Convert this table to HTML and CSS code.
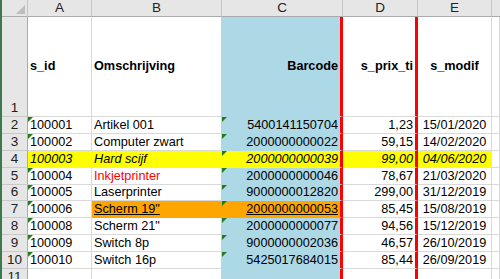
FILE: index.html
```html
<!DOCTYPE html>
<html lang="nl">
  <head>
    <meta charset="UTF-8" />
    <title>Artikelen</title>
    <link rel="stylesheet" href="styles.css">
  </head>
  <body>
    <div class="sheet">
      <!-- kolomkoppen -->
      <div class="row">
        <div class="cell head corner"></div>
        <div class="cell head">A</div>
        <div class="cell head">B</div>
        <div class="cell head">C</div>
        <div class="cell head">D</div>
        <div class="cell head">E</div>
        <div class="cell head last"></div>
      </div>

      <!-- veldnamen -->
      <div class="row title">
        <div class="cell num">1</div>
        <div class="cell a">s_id</div>
        <div class="cell b">Omschrijving</div>
        <div class="cell c right">Barcode</div>
        <div class="cell d right">s_prix_ti</div>
        <div class="cell e center">s_modif</div>
        <div class="cell f"></div>
      </div>

      <div class="row">
        <div class="cell num">2</div>
        <div class="cell a flag">100001</div>
        <div class="cell b">Artikel 001</div>
        <div class="cell c flag right">5400141150704</div>
        <div class="cell d right">1,23</div>
        <div class="cell e center">15/01/2020</div>
        <div class="cell f"></div>
      </div>
      <div class="row">
        <div class="cell num">3</div>
        <div class="cell a flag">100002</div>
        <div class="cell b">Computer zwart</div>
        <div class="cell c flag right">2000000000022</div>
        <div class="cell d right">59,15</div>
        <div class="cell e center">14/02/2020</div>
        <div class="cell f"></div>
      </div>
      <div class="row yellow">
        <div class="cell num">4</div>
        <div class="cell a">100003</div>
        <div class="cell b">Hard scijf</div>
        <div class="cell c flag right">2000000000039</div>
        <div class="cell d right">99,00</div>
        <div class="cell e center">04/06/2020</div>
        <div class="cell f"></div>
      </div>
      <div class="row">
        <div class="cell num">5</div>
        <div class="cell a flag">100004</div>
        <div class="cell b red">Inkjetprinter</div>
        <div class="cell c flag right">2000000000046</div>
        <div class="cell d right">78,67</div>
        <div class="cell e center">21/03/2020</div>
        <div class="cell f"></div>
      </div>
      <div class="row">
        <div class="cell num">6</div>
        <div class="cell a flag">100005</div>
        <div class="cell b">Laserprinter</div>
        <div class="cell c flag right">9000000012820</div>
        <div class="cell d right">299,00</div>
        <div class="cell e center">31/12/2019</div>
        <div class="cell f"></div>
      </div>
      <div class="row orange">
        <div class="cell num">7</div>
        <div class="cell a flag">100006</div>
        <div class="cell b"><span class="dbl">Scherm 19"</span></div>
        <div class="cell c flag right"><span class="sgl">2000000000053</span></div>
        <div class="cell d right">85,45</div>
        <div class="cell e center">15/08/2019</div>
        <div class="cell f"></div>
      </div>
      <div class="row">
        <div class="cell num">8</div>
        <div class="cell a flag">100008</div>
        <div class="cell b">Scherm 21"</div>
        <div class="cell c flag right">2000000000077</div>
        <div class="cell d right">94,56</div>
        <div class="cell e center">15/12/2019</div>
        <div class="cell f"></div>
      </div>
      <div class="row">
        <div class="cell num">9</div>
        <div class="cell a flag">100009</div>
        <div class="cell b">Switch 8p</div>
        <div class="cell c flag right">9000000002036</div>
        <div class="cell d right">46,57</div>
        <div class="cell e center">26/10/2019</div>
        <div class="cell f"></div>
      </div>
      <div class="row">
        <div class="cell num">10</div>
        <div class="cell a flag">100010</div>
        <div class="cell b">Switch 16p</div>
        <div class="cell c flag right">5425017684015</div>
        <div class="cell d right">85,44</div>
        <div class="cell e center">26/09/2019</div>
        <div class="cell f"></div>
      </div>
      <div class="row">
        <div class="cell num">11</div>
        <div class="cell a"></div>
        <div class="cell b"></div>
        <div class="cell c"></div>
        <div class="cell d"></div>
        <div class="cell e"></div>
        <div class="cell f"></div>
      </div>
    </div>
  </body>
</html>
```

FILE: styles.css
```css
body {
  margin: 0;
  background: white;
  font-family: "Liberation Sans", Arial, sans-serif;
  overflow: hidden;
}
.sheet {
  display: grid;
  grid-template-columns: 26px 64px 130px 121px 75px 74px 1fr;
  grid-template-rows: 17px 100px;
  grid-auto-rows: 16.9px;
  border-left: 2px solid #3d7a50;
  height: 279px;
  overflow: hidden;
}
.row {
  display: contents;
}
.cell {
  position: relative;
  box-sizing: border-box;
  display: flex;
  align-items: flex-end;
  padding: 0 2px 1px 2px;
  border-right: 1px solid #d9d9d9;
  border-bottom: 1px solid #d9d9d9;
  font-size: 12.7px;
  line-height: 14px;
  color: black;
  white-space: nowrap;
  overflow: hidden;
}
.right {
  justify-content: flex-end;
}
.center {
  justify-content: center;
}

/* kolomkoppen en rijnummers */
.head {
  background: #e6e6e6;
  justify-content: center;
  align-items: center;
  padding: 0;
  font-size: 13.5px;
  color: #222;
  border-right: 1px solid #c6c6c6;
  border-bottom: 1px solid #ababab;
}
.head.last {
  border-right: none;
}
.corner::after {
  content: "";
  position: absolute;
  right: 2px;
  bottom: 2px;
  border-left: 9px solid transparent;
  border-bottom: 9px solid #bdbdbd;
}
.num {
  background: #e6e6e6;
  justify-content: center;
  padding: 0 0 1px 0;
  font-size: 13.5px;
  color: #222;
  border-right: 1px solid #ababab;
  border-bottom: 1px solid #c9c9c9;
}

/* rij 1: veldnamen */
.title .cell {
  align-items: center;
  font-weight: bold;
}
.title .num {
  align-items: flex-end;
  font-weight: normal;
}

/* kolom C blauw, rode lijnen rechts van C en D */
.b {
  border-right-color: #add8e6;
}
.c {
  background: #add8e6;
  border-bottom-color: #add8e6;
  border-right: 3px solid #ff0000;
}
.d {
  border-right: 3px solid #ff0000;
}

/* groene driehoekjes: getal als tekst */
.flag::before {
  content: "";
  position: absolute;
  top: 0;
  left: 0;
  border-top: 5px solid #1f7d1f;
  border-right: 5px solid transparent;
}

.yellow .a,
.yellow .b,
.yellow .c,
.yellow .d,
.yellow .e {
  background: #ffff00;
  border-bottom-color: #ffff00;
  font-style: italic;
}
.yellow .a,
.yellow .b {
  border-right-color: #ffff00;
}
.yellow .e {
  border-right-color: #ffff00;
}

.orange .b,
.orange .c {
  background: #ffa500;
  border-bottom-color: #ffa500;
}
.orange .b {
  border-right-color: #ffa500;
}
.dbl {
  text-decoration: underline double;
}
.sgl {
  text-decoration: underline;
}

.red {
  color: #ff0000;
}
```
